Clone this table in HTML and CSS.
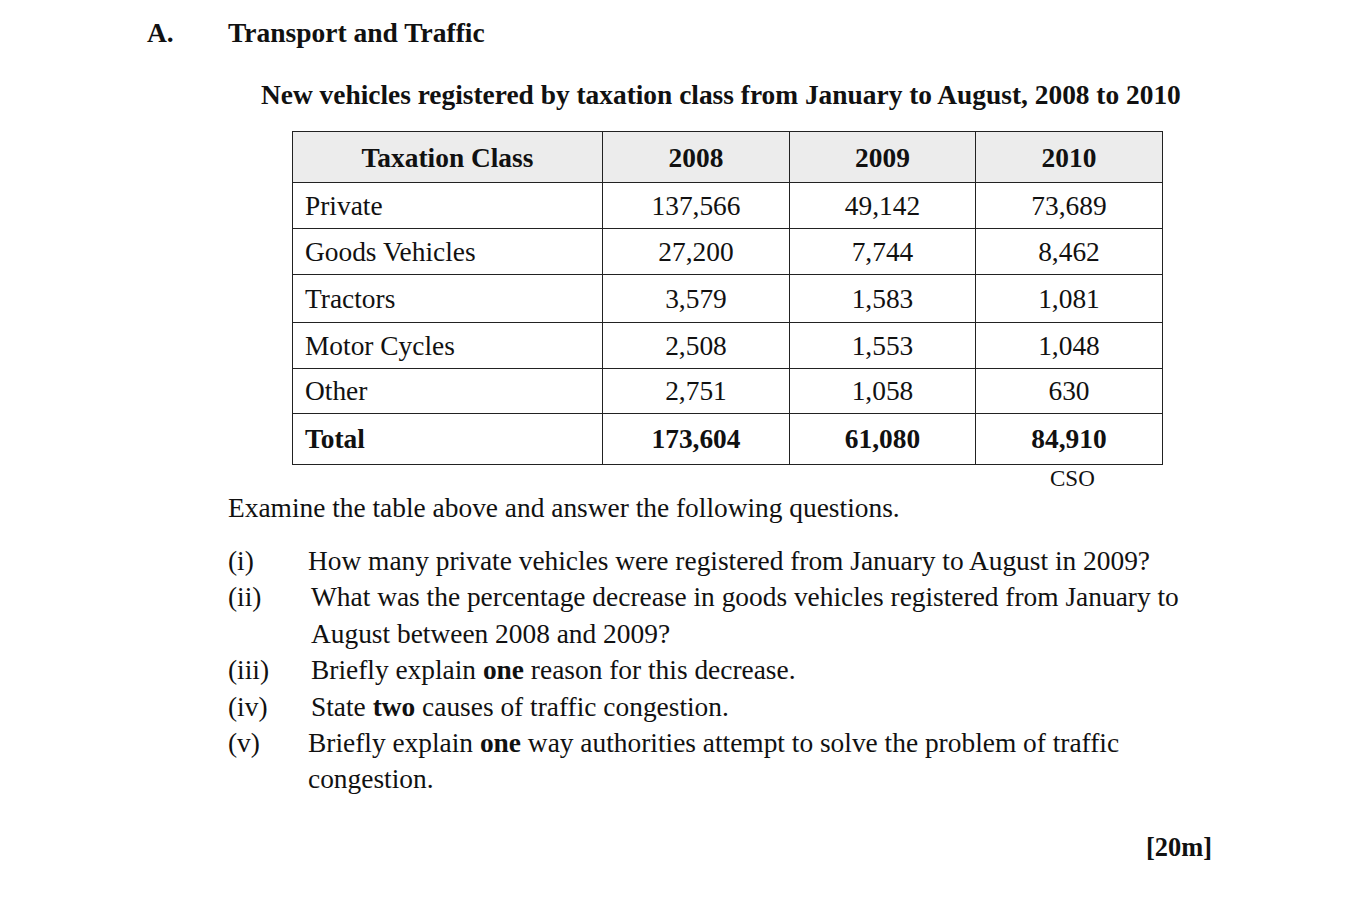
FILE: index.html
```html
<!DOCTYPE html>
<html>
<head>
<meta charset="utf-8">
<link rel="stylesheet" href="styles.css">
</head>
<body>
<div class="page">
  <div class="section-head">
    <span class="sec-letter">A.</span>
    <span class="sec-title">Transport and Traffic</span>
  </div>
  <div class="caption">New vehicles registered by taxation class from January to August, 2008 to 2010</div>
  <table class="data">
    <colgroup>
      <col class="c1"><col class="c2"><col class="c3"><col class="c4">
    </colgroup>
    <thead>
      <tr class="r-head"><th>Taxation Class</th><th>2008</th><th>2009</th><th>2010</th></tr>
    </thead>
    <tbody>
      <tr class="r1"><td class="lbl">Private</td><td>137,566</td><td>49,142</td><td>73,689</td></tr>
      <tr class="r2"><td class="lbl">Goods Vehicles</td><td>27,200</td><td>7,744</td><td>8,462</td></tr>
      <tr class="r3"><td class="lbl">Tractors</td><td>3,579</td><td>1,583</td><td>1,081</td></tr>
      <tr class="r4"><td class="lbl">Motor Cycles</td><td>2,508</td><td>1,553</td><td>1,048</td></tr>
      <tr class="r5"><td class="lbl">Other</td><td>2,751</td><td>1,058</td><td>630</td></tr>
      <tr class="r-total"><td class="lbl">Total</td><td>173,604</td><td>61,080</td><td>84,910</td></tr>
    </tbody>
  </table>
  <div class="source">CSO</div>
  <p class="intro">Examine the table above and answer the following questions.</p>
  <ol class="questions">
    <li><span class="num">(i)</span><span class="q">How many private vehicles were registered from January to August in 2009?</span></li>
    <li><span class="num">(ii)</span><span class="q q-shift">What was the percentage decrease in goods vehicles registered from January to<br>August between 2008 and 2009?</span></li>
    <li><span class="num">(iii)</span><span class="q q-shift">Briefly explain <b>one</b> reason for this decrease.</span></li>
    <li><span class="num">(iv)</span><span class="q q-shift">State <b>two</b> causes of traffic congestion.</span></li>
    <li><span class="num">(v)</span><span class="q">Briefly explain <b>one</b> way authorities attempt to solve the problem of traffic<br>congestion.</span></li>
  </ol>
  <div class="marks">[20m]</div>
</div>
</body>
</html>
```

FILE: styles.css
```css
html, body {
  margin: 0;
  padding: 0;
  background: #ffffff;
}
body {
  font-family: "Liberation Serif", "Times New Roman", serif;
  color: #111111;
  width: 1358px;
  height: 905px;
  overflow: hidden;
}
.page {
  padding: 17px 0 0 0;
}
.section-head {
  display: flex;
  align-items: baseline;
  font-weight: bold;
  font-size: 27.5px;
  line-height: 32px;
  padding-left: 147px;
}
.sec-letter {
  width: 81px;
}
.caption {
  font-weight: bold;
  font-size: 27.4px;
  line-height: 32px;
  margin-top: 30px;
  padding-left: 261px;
}
.data {
  margin-top: 20px;
  margin-left: 292px;
  border-collapse: collapse;
  table-layout: fixed;
  width: 871px;
  font-size: 27.4px;
}
.c1 { width: 310px; }
.c2 { width: 187px; }
.c3 { width: 186px; }
.c4 { width: 187px; }
.data th, .data td {
  border: 1.5px solid #222222;
  text-align: center;
  padding: 0;
  vertical-align: middle;
  line-height: 30px;
}
.data th {
  background: #ececec;
  font-weight: bold;
  height: 48px;
  padding-top: 2px;
}
.data td.lbl {
  text-align: left;
  padding-left: 12px;
}
.r1 td { height: 45px; }
.r2 td { height: 45px; }
.r3 td { height: 47px; }
.r4 td { height: 45px; }
.r5 td { height: 44px; }
.r-total td {
  height: 50px;
  font-weight: bold;
}
.source {
  font-size: 23px;
  line-height: 26px;
  margin-left: 1050px;
  margin-top: 1px;
}
.intro {
  font-size: 27.4px;
  line-height: 32px;
  margin: 0;
  padding-left: 228px;
}
.questions {
  list-style: none;
  margin: 19px 0 0 0;
  padding: 0 0 0 228px;
  font-size: 27.4px;
  line-height: 36.4px;
}
.questions li {
  display: flex;
}
.num {
  width: 80px;
  flex: none;
}
.q-shift {
  margin-left: 3px;
}
.marks {
  font-weight: bold;
  font-size: 26.4px;
  line-height: 32px;
  text-align: right;
  width: 1212px;
  margin-top: 33px;
}
```
